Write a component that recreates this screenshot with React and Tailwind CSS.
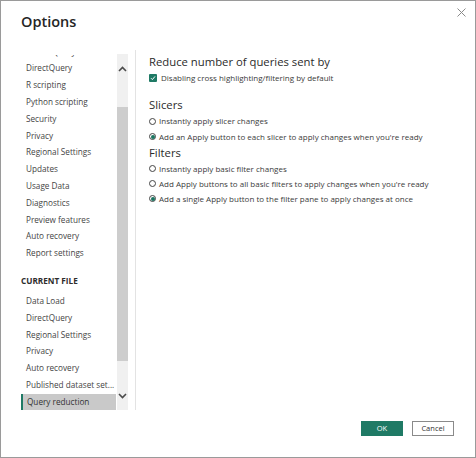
import React from 'react';

const font = { fontFamily: '"Open Sans", "Noto Sans", sans-serif' };

const globalItems = [
  'Power Query Editor',
  'DirectQuery',
  'R scripting',
  'Python scripting',
  'Security',
  'Privacy',
  'Regional Settings',
  'Updates',
  'Usage Data',
  'Diagnostics',
  'Preview features',
  'Auto recovery',
  'Report settings',
];

const fileItems = [
  'Data Load',
  'DirectQuery',
  'Regional Settings',
  'Privacy',
  'Auto recovery',
  'Published dataset set...',
];

const Chevron = ({ up }) => (
  <svg width="9" height="6" viewBox="0 0 9 6" className="block">
    <path
      d={up ? 'M1 5 L4.5 1.5 L8 5' : 'M1 1 L4.5 4.5 L8 1'}
      fill="none"
      stroke="#4a4a4a"
      strokeWidth="1.6"
    />
  </svg>
);

const Radio = ({ checked, label, h }) => (
  <div className={`flex items-center gap-[3px] ${h}`}>
    <span className="w-[7px] h-[7px] rounded-full border border-[#444] flex items-center justify-center bg-white">
      {checked && <span className="w-[4px] h-[4px] rounded-full bg-[#1a7561]"></span>}
    </span>
    <span className="text-[8px] text-[#3b3b3b] leading-none">{label}</span>
  </div>
);

const App = () => {
  return (
    <div style={font} className="w-[476px] h-[458px] bg-white border border-[#9a9a9a] flex flex-col relative">
      {/* Close */}
      <div className="absolute right-[9px] top-[7px]">
        <svg width="9" height="9" viewBox="0 0 9 9">
          <path d="M0.5 0.5 L8.5 8.5 M8.5 0.5 L0.5 8.5" stroke="#8a8a8a" strokeWidth="1" />
        </svg>
      </div>

      {/* Title */}
      <div className="h-[47px] pl-[20px] pt-[11px]">
        <h1 className="text-[14.5px] font-semibold text-[#252525] leading-[20px]">Options</h1>
      </div>

      {/* Body */}
      <div className="flex h-[362px]">
        {/* Nav */}
        <div className="ml-[20px] w-[95px] mt-[7px] h-[355px] overflow-hidden">
          <div className="-mt-[11.6px]">
            {globalItems.map((t, i) => (
              <div key={i} className="h-[16.8px] flex items-center pl-[5px] text-[8.2px] text-[#444] whitespace-nowrap">
                {t}
              </div>
            ))}
            <div className="h-[31px] pt-[13px] text-[8.2px] font-bold text-[#2d2d2d] leading-[12px]">CURRENT FILE</div>
            {fileItems.map((t, i) => (
              <div key={i} className="h-[16.8px] flex items-center pl-[5px] text-[8.2px] text-[#444] whitespace-nowrap">
                {t}
              </div>
            ))}
            <div className="h-[16.8px] flex items-center pl-[4px] text-[8.2px] text-[#333] bg-[#c9c9c9] border-l-[2px] border-[#1f7a65] whitespace-nowrap">
              Query reduction
            </div>
          </div>
        </div>

        {/* Scrollbar */}
        <div className="ml-[1px] w-[11px] mt-[6px] h-[356px] bg-[#f0f0f0] flex flex-col items-center">
          <div className="h-[53px] flex items-start pt-[12px]">
            <Chevron up />
          </div>
          <div className="w-[11px] h-[254px] bg-[#cdcdcd]"></div>
          <div className="pt-[32px]">
            <Chevron />
          </div>
        </div>

        {/* Divider */}
        <div className="ml-[7px] w-px mt-[2px] h-[360px] bg-[#e3e3e3]"></div>

        {/* Content */}
        <div className="ml-[13px] pt-[5px]">
          <h2 className="text-[11.3px] text-[#2b2b2b] leading-[18px]">Reduce number of queries sent by</h2>
          <div className="flex items-center gap-[4px] h-[14px]">
            <span className="w-[8px] h-[8px] bg-[#1f7a65] flex items-center justify-center rounded-[1px]">
              <svg width="6" height="6" viewBox="0 0 6 6">
                <path d="M1 3.2 L2.4 4.6 L5 1.4" fill="none" stroke="white" strokeWidth="1" />
              </svg>
            </span>
            <span className="text-[8px] text-[#3b3b3b] leading-none">Disabling cross highlighting/filtering by default</span>
          </div>

          <h2 className="mt-[12px] text-[11.3px] text-[#2b2b2b] leading-[16px]">Slicers</h2>
          <Radio h="h-[16px]" label="Instantly apply slicer changes" />
          <Radio h="h-[15px]" checked label="Add an Apply button to each slicer to apply changes when you're ready" />

          <h2 className="mt-[1px] text-[11.3px] text-[#2b2b2b] leading-[16px]">Filters</h2>
          <Radio h="h-[15px]" label="Instantly apply basic filter changes" />
          <Radio h="h-[15px]" label="Add Apply buttons to all basic filters to apply changes when you're ready" />
          <Radio h="h-[15px]" checked label="Add a single Apply button to the filter pane to apply changes at once" />
        </div>
      </div>

      {/* Footer */}
      <div className="flex-1 flex justify-end items-start gap-[9px] pr-[21px] pt-[11px]">
        <button className="w-[42px] h-[15px] bg-[#1f7a65] text-white text-[7.5px] leading-none">OK</button>
        <button className="w-[42px] h-[15px] bg-white border border-[#8a8a8a] text-[#333] text-[7.5px] leading-none">Cancel</button>
      </div>
    </div>
  );
};

export default App;
